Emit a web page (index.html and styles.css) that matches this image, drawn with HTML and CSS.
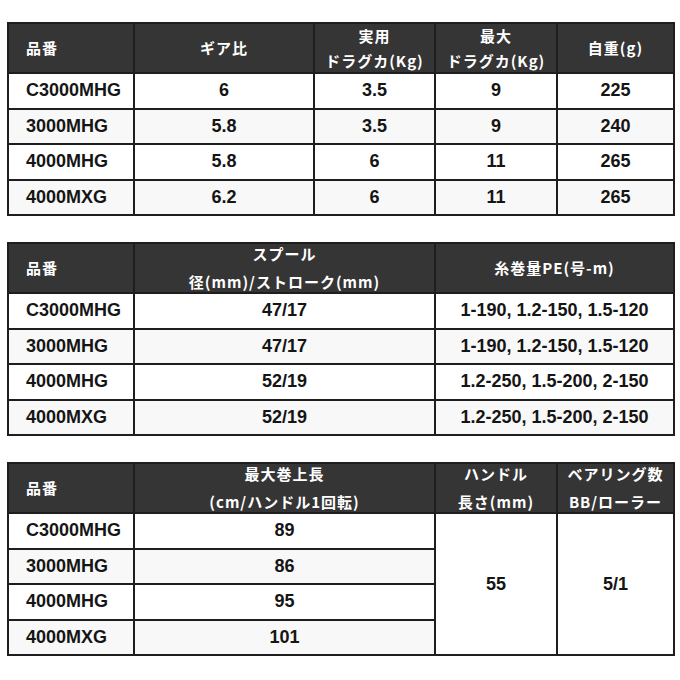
FILE: index.html
```html
<!DOCTYPE html>
<html lang="ja">
<head>
<meta charset="utf-8">
<link rel="stylesheet" href="styles.css">
</head>
<body>
<div class="page">
  <table class="spec t1">
    <colgroup><col class="c126"><col class="c180"><col class="c121"><col class="c122"><col class="c117"></colgroup>
    <thead>
      <tr>
        <th class="left">品番</th>
        <th>ギア比</th>
        <th><div class="two l25"><span>実用</span><span>ドラグカ(Kg)</span></div></th>
        <th><div class="two l25"><span>最大</span><span>ドラグカ(Kg)</span></div></th>
        <th>自重(g)</th>
      </tr>
    </thead>
    <tbody>
      <tr><td class="left">C3000MHG</td><td>6</td><td>3.5</td><td>9</td><td>225</td></tr>
      <tr class="alt"><td class="left">3000MHG</td><td>5.8</td><td>3.5</td><td>9</td><td>240</td></tr>
      <tr><td class="left">4000MHG</td><td>5.8</td><td>6</td><td>11</td><td>265</td></tr>
      <tr class="alt"><td class="left">4000MXG</td><td>6.2</td><td>6</td><td>11</td><td>265</td></tr>
    </tbody>
  </table>

  <table class="spec">
    <colgroup><col class="c126"><col class="c301"><col class="c239"></colgroup>
    <thead>
      <tr>
        <th class="left">品番</th>
        <th><div class="two"><span>スプール</span><span>径(mm)/ストローク(mm)</span></div></th>
        <th>糸巻量PE(号-m)</th>
      </tr>
    </thead>
    <tbody>
      <tr><td class="left">C3000MHG</td><td>47/17</td><td>1-190, 1.2-150, 1.5-120</td></tr>
      <tr class="alt"><td class="left">3000MHG</td><td>47/17</td><td>1-190, 1.2-150, 1.5-120</td></tr>
      <tr><td class="left">4000MHG</td><td>52/19</td><td>1.2-250, 1.5-200, 2-150</td></tr>
      <tr class="alt"><td class="left">4000MXG</td><td>52/19</td><td>1.2-250, 1.5-200, 2-150</td></tr>
    </tbody>
  </table>

  <table class="spec">
    <colgroup><col class="c126"><col class="c301"><col class="c122"><col class="c117"></colgroup>
    <thead>
      <tr>
        <th class="left">品番</th>
        <th><div class="two"><span>最大巻上長</span><span>(cm/ハンドル1回転)</span></div></th>
        <th><div class="two"><span>ハンドル</span><span>長さ(mm)</span></div></th>
        <th><div class="two"><span>ベアリング数</span><span>BB/ローラー</span></div></th>
      </tr>
    </thead>
    <tbody>
      <tr><td class="left">C3000MHG</td><td>89</td><td rowspan="4" class="span">55</td><td rowspan="4" class="span">5/1</td></tr>
      <tr class="alt"><td class="left">3000MHG</td><td>86</td></tr>
      <tr><td class="left">4000MHG</td><td>95</td></tr>
      <tr class="alt"><td class="left">4000MXG</td><td>101</td></tr>
    </tbody>
  </table>
</div>
</body>
</html>
```

FILE: styles.css
```css
html, body {
  margin: 0;
  padding: 0;
  background: #ffffff;
}

.page {
  padding: 22px 7px 0 7px;
  display: flex;
  flex-direction: column;
  gap: 26px;
  font-family: "Liberation Sans", "Noto Sans CJK JP", sans-serif;
}

.spec {
  width: 666px;
  border-collapse: collapse;
  table-layout: fixed;
  border: 2px solid #1e1e1e;
}

.c126 { width: 126px; }
.c180 { width: 180px; }
.c121 { width: 121px; }
.c122 { width: 122px; }
.c117 { width: 117px; }
.c301 { width: 301px; }
.c239 { width: 239px; }

.spec th {
  background: #353535;
  color: #ffffff;
  font-family: "Noto Sans CJK JP", sans-serif;
  font-size: 15px;
  font-weight: 700;
  letter-spacing: 1px;
  height: 48px;
  padding: 0;
  border: 2px solid #1e1e1e;
  text-align: center;
  vertical-align: middle;
  line-height: 20px;
}

.spec td {
  height: 33.5px;
  padding: 0;
  border: 2px solid #1e1e1e;
  text-align: center;
  vertical-align: middle;
  font-size: 18px;
  font-weight: 700;
  color: #151515;
  background: #ffffff;
}

.spec tr.alt td {
  background: #f8f8f8;
}

.spec tr.alt td.span,
.spec td.span {
  background: #ffffff;
}

.spec .left {
  text-align: left;
  padding-left: 17px;
}

.two {
  height: 48px;
  display: flex;
  flex-direction: column;
  justify-content: center;
  align-items: center;
  line-height: 28px;
}

.two.l25 {
  line-height: 25px;
}

.two span {
  display: block;
  white-space: nowrap;
}
```
